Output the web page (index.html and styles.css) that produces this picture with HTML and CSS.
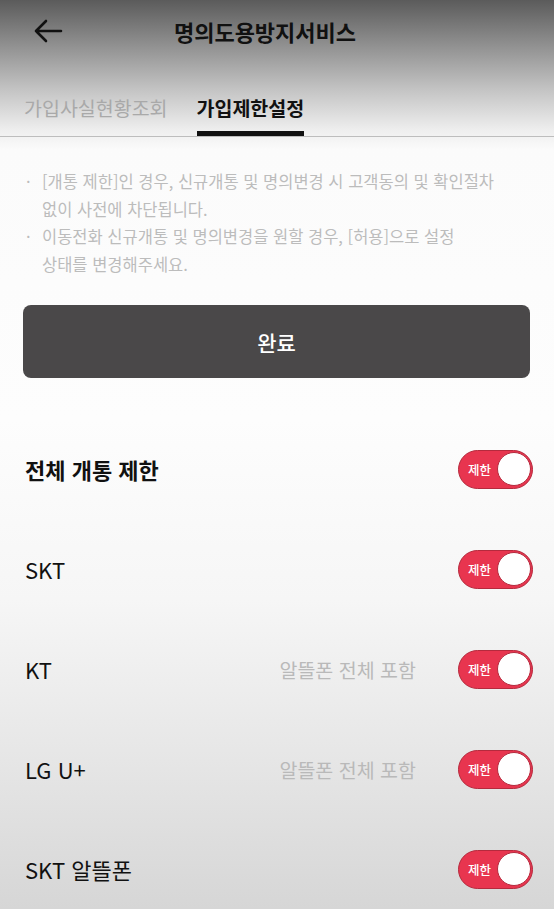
FILE: index.html
```html
<!DOCTYPE html>
<html lang="ko">
<head>
  <meta charset="UTF-8">
  <meta name="viewport" content="width=device-width, initial-scale=1.0">
  <title>명의도용방지서비스</title>
  <link rel="stylesheet" href="styles.css">
</head>
<body>
  <!-- Header -->
  <div class="header">
    <a class="back" href="#">
      <svg width="30" height="26" viewBox="0 0 30 26">
        <path d="M28 13H3M13 3L3 13L13 23" fill="none" stroke="#111" stroke-width="2.6" stroke-linecap="round" stroke-linejoin="round"/>
      </svg>
    </a>
    <div class="title">명의도용방지서비스</div>
  </div>

  <!-- Tabs -->
  <div class="tabs">
    <div class="tab">가입사실현황조회</div>
    <div class="tab active">가입제한설정</div>
  </div>

  <!-- Notes -->
  <ul class="notes">
    <li>[개통 제한]인 경우, 신규개통 및 명의변경 시 고객동의 및 확인절차<br>없이 사전에 차단됩니다.</li>
    <li>이동전화 신규개통 및 명의변경을 원할 경우, [허용]으로 설정<br>상태를 변경해주세요.</li>
  </ul>

  <div class="btn-wrap">
    <button class="btn-done">완료</button>
  </div>

  <!-- Carrier list -->
  <div class="list">
    <div class="row">
      <span class="label bold">전체 개통 제한</span>
      <span class="toggle"><span class="toggle-text">제한</span><span class="knob"></span></span>
    </div>
    <div class="row">
      <span class="label">SKT</span>
      <span class="toggle"><span class="toggle-text">제한</span><span class="knob"></span></span>
    </div>
    <div class="row">
      <span class="label">KT</span>
      <span class="sub">알뜰폰 전체 포함</span>
      <span class="toggle"><span class="toggle-text">제한</span><span class="knob"></span></span>
    </div>
    <div class="row">
      <span class="label">LG U+</span>
      <span class="sub">알뜰폰 전체 포함</span>
      <span class="toggle"><span class="toggle-text">제한</span><span class="knob"></span></span>
    </div>
    <div class="row">
      <span class="label">SKT 알뜰폰</span>
      <span class="toggle"><span class="toggle-text">제한</span><span class="knob"></span></span>
    </div>
  </div>
</body>
</html>
```

FILE: styles.css
```css
/* Basic styling for the page */
body {
  font-family: "Noto Sans CJK KR", "Noto Sans", sans-serif;
  margin: 0;
  padding: 0;
  width: 554px;
  height: 909px;
  overflow: hidden;
  color: #111;
  background: linear-gradient(to bottom, #5b5b5b 0, #8a8a8a 40px, #c4c4c4 90px, #eeeeee 130px, #fbfbfb 150px, #fdfdfd 420px, #f6f6f6 600px, #e6e6e6 760px, #d6d6d6 909px);
}
.header {
  height: 64px;
  position: relative;
  display: flex;
  align-items: center;
  justify-content: center;
  padding-right: 24px;
}
.back {
  position: absolute;
  left: 33px;
  top: 18px;
  display: block;
  line-height: 0;
}
.title {
  font-size: 22px;
  font-weight: bold;
  margin-top: -2px;
}
.tabs {
  height: 72px;
  display: flex;
  align-items: flex-end;
  padding-left: 24px;
  gap: 29px;
  border-bottom: 1px solid #bdbdbd;
}
.tab {
  font-size: 19.5px;
  color: #a9a9a9;
  padding-bottom: 10px;
  border-bottom: 5px solid transparent;
  line-height: 26px;
}
.tab.active {
  color: #111;
  font-weight: bold;
  border-bottom-color: #111;
}
.notes {
  list-style: none;
  margin: 0;
  padding: 31px 20px 0 42px;
  font-size: 16.5px;
  line-height: 27.5px;
  color: #bcbcbc;
}
.notes li {
  position: relative;
}
.notes li::before {
  content: "·";
  position: absolute;
  left: -16px;
}
.btn-wrap {
  padding: 27px 24px 0 23px;
}
.btn-done {
  width: 100%;
  height: 73px;
  border: none;
  border-radius: 8px;
  background-color: #4a4849;
  color: #fff;
  font-family: inherit;
  font-size: 21px;
  font-weight: 500;
}
.list {
  margin-top: 41px;
}
.row {
  height: 100px;
  display: flex;
  align-items: center;
  padding: 0 21px 0 25px;
}
.label {
  font-size: 22px;
  flex: 1;
}
.label.bold {
  font-weight: bold;
}
.sub {
  font-size: 19.5px;
  color: #b9b9b9;
  margin-right: 42px;
}
.toggle {
  width: 75px;
  height: 39px;
  box-sizing: border-box;
  border-radius: 20px;
  background-color: #e8354f;
  border: 1.5px solid #b52a3d;
  display: flex;
  align-items: center;
  justify-content: space-between;
  padding: 0 1px 0 9px;
}
.toggle-text {
  color: #fff;
  font-size: 12.5px;
  font-weight: 500;
}
.knob {
  width: 34px;
  height: 34px;
  box-sizing: border-box;
  border-radius: 50%;
  background-color: #fff;
  border: 1.5px solid #b52a3d;
}
```
